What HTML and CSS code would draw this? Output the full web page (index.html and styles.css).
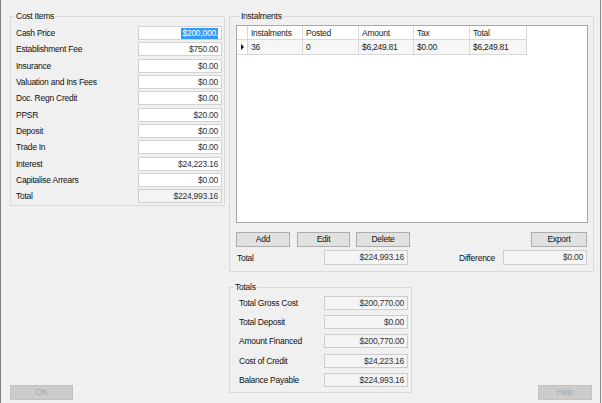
FILE: index.html
```html
<!DOCTYPE html>
<html>
<head>
<meta charset="utf-8">
<link rel="stylesheet" href="styles.css">
</head>
<body>
<div class="window">
  <div class="left">
    <fieldset class="group cost">
      <legend>Cost Items</legend>
      <div class="row"><span class="lbl">Cash Price</span><span class="box"><span class="sel">$200,000.</span></span></div>
      <div class="row"><span class="lbl">Establishment Fee</span><span class="box">$750.00</span></div>
      <div class="row"><span class="lbl">Insurance</span><span class="box">$0.00</span></div>
      <div class="row"><span class="lbl">Valuation and Ins Fees</span><span class="box">$0.00</span></div>
      <div class="row"><span class="lbl">Doc. Regn Credit</span><span class="box">$0.00</span></div>
      <div class="row"><span class="lbl">PPSR</span><span class="box">$20.00</span></div>
      <div class="row"><span class="lbl">Deposit</span><span class="box">$0.00</span></div>
      <div class="row"><span class="lbl">Trade In</span><span class="box">$0.00</span></div>
      <div class="row"><span class="lbl">Interest</span><span class="box">$24,223.16</span></div>
      <div class="row"><span class="lbl">Capitalise Arrears</span><span class="box">$0.00</span></div>
      <div class="row"><span class="lbl">Total</span><span class="box ro">$224,993.16</span></div>
    </fieldset>
    <div class="btn disabled ok">OK</div>
  </div>
  <div class="right">
    <fieldset class="group inst">
      <legend>Instalments</legend>
      <div class="grid">
        <div class="grow head">
          <span class="c rh"></span>
          <span class="c w1">Instalments</span>
          <span class="c w2">Posted</span>
          <span class="c w3">Amount</span>
          <span class="c w4">Tax</span>
          <span class="c w5">Total</span>
        </div>
        <div class="grow data">
          <span class="c rh"><span class="tri"></span></span>
          <span class="c w1">36</span>
          <span class="c w2">0</span>
          <span class="c w3">$6,249.81</span>
          <span class="c w4">$0.00</span>
          <span class="c w5">$6,249.81</span>
        </div>
      </div>
      <div class="btnrow">
        <div class="btn add">Add</div>
        <div class="btn edit">Edit</div>
        <div class="btn del">Delete</div>
        <div class="btn export">Export</div>
      </div>
      <div class="totrow">
        <span class="tl">Total</span>
        <span class="box ro">$224,993.16</span>
        <span class="dl">Difference</span>
        <span class="box ro">$0.00</span>
      </div>
    </fieldset>
    <div class="bottom">
      <fieldset class="group totals">
        <legend>Totals</legend>
        <div class="trow"><span class="lbl">Total Gross Cost</span><span class="box ro">$200,770.00</span></div>
        <div class="trow"><span class="lbl">Total Deposit</span><span class="box ro">$0.00</span></div>
        <div class="trow"><span class="lbl">Amount Financed</span><span class="box ro">$200,770.00</span></div>
        <div class="trow"><span class="lbl">Cost of Credit</span><span class="box ro">$24,223.16</span></div>
        <div class="trow"><span class="lbl">Balance Payable</span><span class="box ro">$224,993.16</span></div>
      </fieldset>
      <div class="btn disabled help">Help</div>
    </div>
  </div>
</div>
</body>
</html>
```
FILE: styles.css
```css
html, body {
  margin: 0;
  padding: 0;
  background: #f0f0f0;
}
body {
  font-family: "Liberation Sans", Arial, sans-serif;
  font-size: 8.5px;
  letter-spacing: -0.25px;
  color: #111;
}
.window {
  width: 601px;
  height: 403px;
  box-sizing: border-box;
  border-left: 1px solid #7d7d7d;
  border-right: 1px solid #8a8a8a;
  padding: 11px 0 0 9px;
  display: flex;
  overflow: hidden;
}
.left {
  width: 215px;
  height: 392px;
  display: flex;
  flex-direction: column;
}
.group {
  margin: 0;
  border: 1px solid #d9d9d9;
  box-sizing: border-box;
  min-width: 0;
}
.group legend {
  line-height: 11px;
  padding: 0 1px;
  margin-left: 4px;
}
.cost {
  width: 215px;
  padding: 3px 0 1px 0;
}
.row {
  height: 16.3px;
  display: flex;
  align-items: center;
}
.lbl {
  flex: 1;
  padding-left: 5px;
}
.box {
  width: 84px;
  height: 14px;
  box-sizing: border-box;
  background: #fff;
  border: 1px solid #d2d2d2;
  color: #333;
  text-align: right;
  padding-right: 3px;
  line-height: 12px;
  white-space: nowrap;
}
.row .box {
  margin-right: 2px;
}
.box.ro {
  background: #f4f4f4;
  border-color: #cdcdcd;
}
.sel {
  background: #3399ff;
  color: #fff;
  padding: 0 0 1px 1px;
}
.btn {
  height: 15px;
  box-sizing: border-box;
  border: 1px solid #adadad;
  background: #e1e1e1;
  text-align: center;
  line-height: 13px;
  color: #111;
}
.btn.disabled {
  background: #cccccc;
  border-color: #c2c2c2;
  color: #a8a8a8;
}
.ok {
  width: 63px;
  margin-top: auto;
  margin-bottom: 3px;
}
.right {
  width: 365px;
  margin-left: 4px;
  display: flex;
  flex-direction: column;
  height: 392px;
}
.inst {
  width: 365px;
  padding: 3px 0 6px 6px;
}
.grid {
  width: 352px;
  height: 198px;
  box-sizing: border-box;
  border: 1px solid #a8a8a8;
  background: #fff;
}
.grow {
  display: flex;
}
.grow.head {
  height: 14px;
}
.grow.data {
  height: 15px;
}
.c {
  box-sizing: border-box;
  border-right: 1px solid #d8d8d8;
  border-bottom: 1px solid #d8d8d8;
  padding-left: 3px;
  white-space: nowrap;
  display: flex;
  align-items: center;
}
.data .c {
  background: #f6f6f6;
  color: #222;
}
.head .c {
  background: #fff;
  color: #222;
}
.data .c.rh {
  background: #fff;
}
.rh { width: 11px; padding-left: 0; justify-content: center; }
.w1 { width: 55px; padding-left: 3px; }
.w2 { width: 56px; }
.w3 { width: 55px; }
.w4 { width: 56px; }
.w5 { width: 57px; }
.tri {
  width: 0;
  height: 0;
  border-top: 3px solid transparent;
  border-bottom: 3px solid transparent;
  border-left: 3px solid #111;
}
.btnrow {
  display: flex;
  margin-top: 9px;
  width: 351px;
}
.add { width: 54px; }
.edit { width: 53px; margin-left: 7px; }
.del { width: 54px; margin-left: 6px; }
.export { width: 56px; margin-left: auto; }
.totrow {
  display: flex;
  align-items: center;
  margin-top: 3px;
  height: 15px;
}
.tl {
  width: 88px;
  padding-left: 1px;
  box-sizing: border-box;
}
.dl {
  margin-left: 51px;
  width: 44px;
}
.totrow .box {
  height: 15px;
  line-height: 13px;
}
.bottom {
  flex: 1;
  display: flex;
  margin-top: 10px;
}
.totals {
  width: 183px;
  align-self: flex-start;
  padding: 0 0 3px 0;
}
.trow {
  height: 19.3px;
  display: flex;
  align-items: center;
}
.trow .lbl {
  padding-left: 9px;
}
.trow .box {
  margin-right: 3px;
}
.help {
  width: 54px;
  align-self: flex-end;
  margin-left: auto;
  margin-right: 2px;
  margin-bottom: 3px;
}
```
